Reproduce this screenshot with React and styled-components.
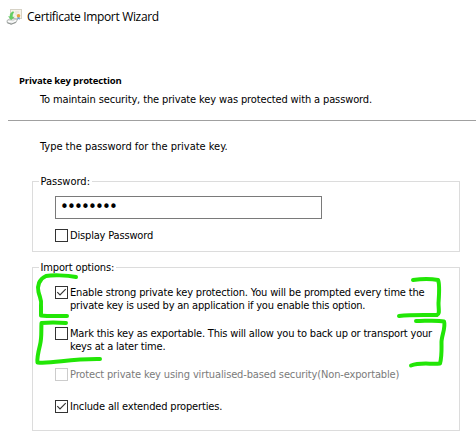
import React from 'react';
import styled, { createGlobalStyle } from 'styled-components';

const GlobalStyle = createGlobalStyle`
  * { box-sizing: border-box; }
  body { margin: 0; background: #fff; }
`;

const Wizard = styled.main`
  position: relative;
  width: 476px;
  height: 437px;
  overflow: hidden;
  background: #fff;
  color: #000;
  font: 11px/13px "DejaVu Sans Condensed", "DejaVu Sans", sans-serif;
`;

const TitleBar = styled.header`
  display: flex;
  align-items: center;
  gap: 5px;
  height: 33px;
  padding-left: 6px;
`;

const Title = styled.h1`
  margin: 0;
  font: 400 12px/16px "Open Sans", sans-serif;
  letter-spacing: -0.33px;
  white-space: nowrap;
`;

const PageHeader = styled.section`
  height: 88px;
  margin-left: 8px;
  padding: 41px 0 0 11px;
  border-bottom: 1px solid #a0a0a0;
`;

const Heading = styled.h2`
  margin: 0 0 6px;
  font: 700 9.5px/13px "Open Sans", sans-serif;
  letter-spacing: -0.15px;
`;

const Line = styled.span`
  display: block;
  white-space: nowrap;
  letter-spacing: ${({ $track = -0.17 }) => $track}px;
`;

const Description = styled.div`
  padding-left: 21px;
`;

const Content = styled.section`
  display: flex;
  flex-direction: column;
  padding: 19px 16px 0 32px;
`;

const Prompt = styled.div`
  padding-left: 8px;
  margin-bottom: 22px;
`;

const Group = styled.fieldset`
  width: 428px;
  height: ${({ $height }) => $height}px;
  margin: 0 0 ${({ $gap = 0 }) => $gap}px;
  padding: ${({ $top }) => $top}px 0 0 22px;
  border: 1px solid #dcdcdc;
  min-width: 0;
`;

const Legend = styled.legend`
  height: 13px;
  margin-left: -16px;
  padding: 0 2px 0 1.5px;
`;

const PasswordField = styled.div`
  width: 267px;
  height: 23px;
  padding-left: 4px;
  border: 1px solid #7a7a7a;
  font: 15px/21px "DejaVu Sans", sans-serif;
  letter-spacing: -1.85px;
`;

const Option = styled.div`
  display: flex;
  align-items: flex-start;
  gap: 2px;
  margin-top: ${({ $top = 0 }) => $top}px;
  color: ${({ $disabled }) => ($disabled ? '#7b7b7b' : '#000')};
`;

const Box = styled.span`
  display: block;
  flex: none;
  width: 13px;
  height: 13px;
  border: 1px solid ${({ $disabled }) => ($disabled ? '#cccccc' : '#333')};
`;

const Tick = styled.svg`
  display: block;
  width: 11px;
  height: 11px;
`;

const Marker = styled.svg`
  position: absolute;
  inset: 0;
  pointer-events: none;
`;

function CertificateIcon() {
  return (
    <svg width="16" height="16" viewBox="0 0 16 16" aria-hidden="true">
      <rect x="4.5" y="0.500" width="11" height="9" fill="#f6f3ea" stroke="#d6d2c6" />
      <path d="M9 3h4M9 5h2" stroke="#e2dfd6" />
      <path d="M1 11.500l4-2.500 6.500 1.500-1.500 3-5 1.800-4-1.800z" fill="#dcdedd" stroke="#a2a6a4" strokeWidth=".7" />
      <path d="M2 12.300l5 .9 3-2" fill="none" stroke="#fff" strokeWidth="1.200" />
      <path d="M1.300 13.800l4 1.300 4.500-1.800" fill="none" stroke="#858a88" strokeWidth=".8" />
      <path d="M11.500 8l-.3 3 1.300-.9 1.400.6L13.500 8z" fill="#6b9fd6" />
      <circle cx="12.500" cy="6.800" r="1.800" fill="#e5a440" />
      <path d="M7 2.500C4.500 3.500 3.800 5.500 4 7.500H2.500L5 11 8.300 8H6.600C6.400 6 6.800 4.500 8 3.200z" fill="#62cf62" stroke="#57bd5a" strokeWidth=".3" />
    </svg>
  );
}

function Checkbox({ checked, disabled }) {
  return (
    <Box $disabled={disabled}>
      {checked && (
        <Tick viewBox="0 0 11 11">
          <path d="M1.300 5.200L4 7.900L9.700 2.200" fill="none" stroke="#333" strokeWidth="1.150" />
        </Tick>
      )}
    </Box>
  );
}

function CheckOption({ lines, checked, disabled, top }) {
  return (
    <Option $disabled={disabled} $top={top}>
      <Checkbox checked={checked} disabled={disabled} />
      <div>
        {lines.map(([text, track]) => (
          <Line key={text} $track={track}>{text}</Line>
        ))}
      </div>
    </Option>
  );
}

export default function App() {
  return (
    <>
      <GlobalStyle />
      <Wizard>
        <TitleBar>
          <CertificateIcon />
          <Title>Certificate Import Wizard</Title>
        </TitleBar>
        <PageHeader>
          <Heading>Private key protection</Heading>
          <Description>
            <Line $track={-0.13}>To maintain security, the private key was protected with a password.</Line>
          </Description>
        </PageHeader>
        <Content>
          <Prompt>
            <Line $track={-0.02}>Type the password for the private key.</Line>
          </Prompt>
          <Group $height={77} $gap={9} $top={8}>
            <Legend><Line $track={0}>Password:</Line></Legend>
            <PasswordField>••••••••</PasswordField>
            <CheckOption top={10} lines={[['Display Password', -0.17]]} />
          </Group>
          <Group $height={170} $top={12}>
            <Legend><Line $track={-0.14}>Import options:</Line></Legend>
            <CheckOption
              checked
              lines={[
                ['Enable strong private key protection. You will be prompted every time the', -0.16],
                ['private key is used by an application if you enable this option.', -0.2],
              ]}
            />
            <CheckOption
              top={15}
              lines={[
                ['Mark this key as exportable. This will allow you to back up or transport your', -0.18],
                ['keys at a later time.', -0.19],
              ]}
            />
            <CheckOption
              disabled
              top={15}
              lines={[['Protect private key using virtualised-based security(Non-exportable)', -0.14]]}
            />
            <CheckOption checked top={19} lines={[['Include all extended properties.', -0.16]]} />
          </Group>
        </Content>
        <Marker
          width="476"
          height="437"
          fill="none"
          stroke="#22e606"
          strokeWidth="4"
          strokeLinecap="round"
          strokeLinejoin="round"
        >
          <path d="M76 277C66 275 52 275 46 276C39 279 37 286 38.500 292C40 298 42 300 41 306L41 315.500C49 316.500 59 316 67 316" />
          <path d="M66 323C58 322.500 48 322.500 41.500 323C41 331 42 337 40 345C38 353 37 359 37.500 362.500C54 364 68 358.500 100 359" />
          <path d="M413 280C421 279 432 279 438 280C440 284 439 296 438.500 303C438.500 310 440 314 437 315C424 315 411 314.500 399 316" />
          <path d="M416 321C426 321 437 320 444 321.500C446 327 441.500 336 441.500 342C441.500 350 442 356 440 363.500C431 364.500 420 362 411 365.500" />
        </Marker>
      </Wizard>
    </>
  );
}
